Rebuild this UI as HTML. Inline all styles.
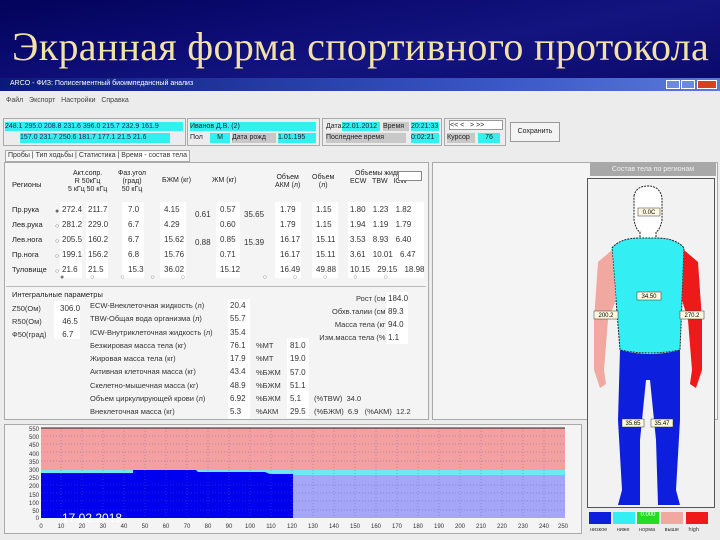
<!DOCTYPE html>
<html><head><meta charset="utf-8"><style>
*{margin:0;padding:0;box-sizing:border-box}
body{width:720px;height:540px;overflow:hidden;position:relative;background:#0a0a6a;font-family:"Liberation Sans",sans-serif;font-size:8px;color:#222}
.a{position:absolute;white-space:nowrap}
.c{background:#33f0f0}
.w{background:#fff}
.g{background:#c8c8c8}
.t{font-size:8px;line-height:10px}
</style></head><body>
<div class="a" style="left:0;top:0;width:720px;height:80px;background:linear-gradient(170deg,#03035a 0%,#0a0a70 30%,#141480 60%,#0a0a6c 100%)"></div>
<div class="a" style="left:12px;top:23px;font-family:'Liberation Serif',serif;font-size:40px;color:#f2e2a6;letter-spacing:0.3px">Экранная форма спортивного протокола</div>
<!-- window -->
<div class="a" style="left:0;top:78px;width:720px;height:13px;background:linear-gradient(90deg,#0a1a7a,#3a58c8 70%,#5a7ad8)"></div>
<div class="a t" style="left:10px;top:79px;color:#fff;font-size:7px">ARCO - ФИЗ: Полисегментный биоимпедансный анализ</div>
<div class="a" style="left:666px;top:80px;width:14px;height:9px;background:#6a8ae0;border:1px solid #fff"></div>
<div class="a" style="left:681px;top:80px;width:14px;height:9px;background:#6a8ae0;border:1px solid #fff"></div>
<div class="a" style="left:697px;top:80px;width:20px;height:9px;background:#d84020;border:1px solid #fff"></div>
<div class="a" style="left:0;top:91px;width:720px;height:449px;background:#ececec"></div>
<div class="a t" style="left:6px;top:96px;color:#444;font-size:7px">Файл &nbsp; Экспорт &nbsp; Настройки &nbsp; Справка</div>
<!-- toolbar -->
<div class="a" style="left:3px;top:118px;width:183px;height:28px;border:1px solid #aaa"></div>
<div class="a c t" style="left:5px;top:122px;width:178px;height:9px;font-size:7px;line-height:9px;color:#225">248.1 295.0 208.8 231.6 396.0 215.7 232.9 161.9</div>
<div class="a c t" style="left:20px;top:133px;width:150px;height:10px;font-size:7px;line-height:10px;color:#225">157.0 231.7 250.6 181.7 177.1 21.5 21.6</div>
<div class="a" style="left:187px;top:118px;width:133px;height:28px;border:1px solid #aaa"></div>
<div class="a c t" style="left:190px;top:122px;width:126px;height:9px;font-size:7px;line-height:9px">Иванов Д.В. (2)</div>
<div class="a t" style="left:190px;top:133px;font-size:7px">Пол</div>
<div class="a c t" style="left:210px;top:133px;width:20px;height:10px;font-size:7px;text-align:center">М</div>
<div class="a g t" style="left:232px;top:133px;width:44px;height:10px;font-size:7px">Дата рожд</div>
<div class="a c t" style="left:278px;top:133px;width:38px;height:10px;font-size:7px">1.01.195</div>
<div class="a" style="left:322px;top:118px;width:120px;height:28px;border:1px solid #aaa"></div>
<div class="a t" style="left:326px;top:122px;font-size:7px">Дата</div>
<div class="a c t" style="left:342px;top:122px;width:38px;height:9px;font-size:7px;line-height:9px">22.01.2012</div>
<div class="a g t" style="left:383px;top:122px;width:26px;height:9px;font-size:7px;line-height:9px">Время</div>
<div class="a c t" style="left:411px;top:122px;width:28px;height:9px;font-size:7px;line-height:9px">20:21:33</div>
<div class="a g t" style="left:326px;top:133px;width:80px;height:10px;font-size:7px">Последнее время</div>
<div class="a c t" style="left:411px;top:133px;width:28px;height:10px;font-size:7px">0:02:21</div>
<div class="a" style="left:444px;top:118px;width:62px;height:28px;border:1px solid #aaa"></div>
<div class="a w t" style="left:449px;top:120px;width:54px;height:10px;font-size:7px;border:1px solid #999">&lt;&lt; &lt; &nbsp; &gt; &gt;&gt;</div>
<div class="a g t" style="left:447px;top:133px;width:28px;height:10px;font-size:7px">Курсор</div>
<div class="a c t" style="left:478px;top:133px;width:22px;height:10px;font-size:7px;text-align:center">76</div>
<div class="a t" style="left:510px;top:122px;width:50px;height:20px;border:1px solid #999;background:#f4f4f4;font-size:7px;line-height:18px;text-align:center">Сохранить</div>
<!-- tabs -->
<div class="a t" style="left:5px;top:150px;font-size:7px;color:#333;border:1px solid #aaa;background:#f6f6f6;padding:0 2px">Пробы | Тип ходьбы | Статистика | <span style="background:#fff">Время - состав тела</span></div>
<!-- main panel -->
<div class="a" style="left:4px;top:162px;width:425px;height:258px;border:1px solid #aaa;background:#f4f4f4"></div>
<div class="a" style="left:6px;top:286px;width:420px;height:1px;background:#bbb"></div>
<div class="a" style="left:432px;top:162px;width:286px;height:258px;border:1px solid #aaa;background:#f4f4f4"></div>
<!-- table headers -->
<div class="a t" style="left:12px;top:180px;font-size:7.5px">Регионы</div>
<div class="a t" style="left:68px;top:170px;font-size:7px;text-align:center;line-height:8px">Акт.сопр.<br>R 50кГц<br>5 кГц 50 кГц</div>
<div class="a t" style="left:118px;top:170px;font-size:7px;text-align:center;line-height:8px">Фаз.угол<br>(град)<br>50 кГц</div>
<div class="a t" style="left:162px;top:176px;font-size:7px">БЖМ (кг)</div>
<div class="a t" style="left:212px;top:176px;font-size:7px">ЖМ (кг)</div>
<div class="a t" style="left:275px;top:174px;font-size:7px;line-height:8px;text-align:center">Объем<br>АКМ (л)</div>
<div class="a t" style="left:312px;top:174px;font-size:7px;line-height:8px;text-align:center">Объем<br>(л)</div>
<div class="a t" style="left:350px;top:170px;font-size:7px;line-height:8px;text-align:center">Объемы жидк.<br>ECW &nbsp; TBW &nbsp; ICW</div>
<div class="a w" style="left:398px;top:171px;width:24px;height:10px;border:1px solid #888"></div>
<div class="a t" style="left:12px;top:202px;font-size:7.5px;line-height:15px">Пр.рука<br>Лев.рука<br>Лев.нога<br>Пр.нога<br>Туловище</div>
<div class="a" style="left:55px;top:204px;font-size:7px;line-height:15px;color:#666">●<br>○<br>○<br>○<br>○</div>
<!-- values -->
<div class="a w" style="left:60px;top:202px;width:22px;height:76px"></div>
<div class="a w" style="left:86px;top:202px;width:22px;height:76px"></div>
<div class="a w" style="left:122px;top:202px;width:22px;height:76px"></div>
<div class="a w" style="left:160px;top:202px;width:26px;height:76px"></div>
<div class="a w" style="left:216px;top:202px;width:24px;height:76px"></div>
<div class="a w" style="left:275px;top:202px;width:26px;height:76px"></div>
<div class="a w" style="left:312px;top:202px;width:26px;height:76px"></div>
<div class="a w" style="left:348px;top:202px;width:76px;height:76px"></div>
<div class="a" style="left:62px;top:202px;font-size:8px;line-height:15px;color:#333">272.4<br>281.2<br>205.5<br>199.1<br>21.6</div>
<div class="a" style="left:88px;top:202px;font-size:8px;line-height:15px;color:#333">211.7<br>229.0<br>160.2<br>156.2<br>21.5</div>
<div class="a" style="left:128px;top:202px;font-size:8px;line-height:15px;color:#333">7.0<br>6.7<br>6.7<br>6.8<br>15.3</div>
<div class="a" style="left:164px;top:202px;font-size:8px;line-height:15px;color:#333">4.15<br>4.29<br>15.62<br>15.76<br>36.02</div>
<div class="a" style="left:195px;top:210px;font-size:8px;color:#333">0.61</div>
<div class="a" style="left:195px;top:238px;font-size:8px;color:#333">0.88</div>
<div class="a" style="left:220px;top:202px;font-size:8px;line-height:15px;color:#333">0.57<br>0.60<br>0.85<br>0.71<br>15.12</div>
<div class="a" style="left:244px;top:210px;font-size:8px;color:#333">35.65</div>
<div class="a" style="left:244px;top:238px;font-size:8px;color:#333">15.39</div>
<div class="a" style="left:280px;top:202px;font-size:8px;line-height:15px;color:#333">1.79<br>1.79<br>16.17<br>16.17<br>16.49</div>
<div class="a" style="left:316px;top:202px;font-size:8px;line-height:15px;color:#333">1.15<br>1.15<br>15.11<br>15.11<br>49.88</div>
<div class="a" style="left:350px;top:202px;font-size:8px;line-height:15px;color:#333;word-spacing:5px">1.80 1.23 1.82<br>1.94 1.19 1.79<br>3.53 8.93 6.40<br>3.61 10.01 6.47<br>10.15 29.15 18.98</div>
<div class="a" style="left:60px;top:274px;font-size:7px;color:#777;word-spacing:24px">● ○ ○ ○ ○ &nbsp; ○ ○ ○ ○ ○</div>
<!-- integral -->
<div class="a t" style="left:12px;top:290px;font-size:7.5px">Интегральные параметры</div>
<div class="a" style="left:12px;top:302px;font-size:7.5px;line-height:13px;color:#333">Z50(Ом)<br>R50(Ом)<br>Ф50(град)</div>
<div class="a w" style="left:54px;top:301px;width:26px;height:38px"></div>
<div class="a" style="left:60px;top:302px;font-size:8px;line-height:13px;color:#333">306.0<br>&nbsp;46.5<br>&nbsp;6.7</div>
<div class="a" style="left:90px;top:299px;font-size:7.5px;line-height:13.3px;color:#333">ECW-Внеклеточная жидкость (л)<br>TBW-Общая вода организма (л)<br>ICW-Внутриклеточная жидкость (л)<br>Безжировая масса тела (кг)<br>Жировая масса тела (кг)<br>Активная клеточная масса (кг)<br>Скелетно-мышечная масса (кг)<br>Объем циркулирующей крови (л)<br>Внеклеточная масса (кг)</div>
<div class="a w" style="left:228px;top:299px;width:22px;height:120px"></div>
<div class="a" style="left:230px;top:299px;font-size:8px;line-height:13.3px;color:#333">20.4<br>55.7<br>35.4<br>76.1<br>17.9<br>43.4<br>48.9<br>6.92<br>5.3</div>
<div class="a" style="left:256px;top:339px;font-size:7.5px;line-height:13.3px;color:#333">%МТ<br>%МТ<br>%БЖМ<br>%БЖМ<br>%БЖМ<br>%АКМ</div>
<div class="a w" style="left:287px;top:338px;width:22px;height:80px"></div>
<div class="a" style="left:290px;top:339px;font-size:8px;line-height:13.3px;color:#333">81.0<br>19.0<br>57.0<br>51.1<br>5.1<br>29.5</div>
<div class="a" style="left:314px;top:392px;font-size:7.5px;line-height:13.3px;color:#333">(%TBW) &nbsp;34.0<br>(%БЖМ) &nbsp;6.9 &nbsp; (%АКМ) &nbsp;12.2</div>
<div class="a" style="left:316px;top:292px;font-size:7.5px;line-height:13px;color:#333;text-align:right;width:72px">Рост (см)<br>Обхв.талии (см)<br>Масса тела (кг)<br>Изм.масса тела (%)</div>
<div class="a w" style="left:386px;top:292px;width:22px;height:52px"></div>
<div class="a" style="left:388px;top:292px;font-size:8px;line-height:13px;color:#333">184.0<br>89.3<br>94.0<br>1.1</div>
<!-- body panel -->
<div class="a" style="left:590px;top:163px;width:126px;height:13px;background:#a8a8a8;color:#eee;font-size:7px;line-height:13px;text-align:center">Состав тела по регионам</div>
<div class="a" style="left:587px;top:178px;width:128px;height:330px;border:1px solid #555;background:#f2f2f2"></div>
<svg class="a" style="left:587px;top:178px" width="128" height="330" viewBox="587 178 128 330">
<path d="M634 196 Q636 186 648 186 Q660 186 662 198 L662 220 Q660 230 656 232 L656 240 L640 240 L640 232 Q636 230 634 220 Z" fill="#fff" stroke="#222" stroke-dasharray="2 1"/>
<path d="M612 248 Q620 238 640 238 L656 238 Q676 238 684 248 L682 300 L680 350 Q650 356 620 350 L616 300 Z" fill="#33eef2" stroke="#222" stroke-dasharray="2 1"/>
<path d="M612 250 L598 262 L594 320 L594 370 L600 388 L606 384 L604 370 L608 320 L616 300 Z" fill="#f0a8a0"/>
<path d="M684 250 L698 262 L702 320 L702 370 L696 388 L690 384 L692 370 L688 320 L682 300 Z" fill="#ee1a1a"/>
<path d="M620 350 Q650 358 680 350 L680 420 L676 490 L680 505 L658 505 L656 440 L650 380 L646 380 L640 440 L640 505 L618 505 L622 490 L618 420 Z" fill="#0d1fdc"/>
<g font-size="6" font-family="Liberation Sans" text-anchor="middle">
<rect x="638" y="208" width="22" height="8" fill="#fff8e0" stroke="#333" stroke-width=".5"/><text x="649" y="214">0.0C</text>
<rect x="637" y="292" width="24" height="8" fill="#fff8e0" stroke="#333" stroke-width=".5"/><text x="649" y="298">34.50</text>
<rect x="594" y="311" width="24" height="8" fill="#fff8e0" stroke="#333" stroke-width=".5"/><text x="606" y="317">200.2</text>
<rect x="680" y="311" width="24" height="8" fill="#fff8e0" stroke="#333" stroke-width=".5"/><text x="692" y="317">270.2</text>
<rect x="622" y="419" width="22" height="8" fill="#fff8e0" stroke="#333" stroke-width=".5"/><text x="633" y="425">35.65</text>
<rect x="651" y="419" width="22" height="8" fill="#fff8e0" stroke="#333" stroke-width=".5"/><text x="662" y="425">35.47</text>
</g></svg>
<div class="a" style="left:589px;top:512px;width:22px;height:12px;background:#0d1fdc"></div>
<div class="a" style="left:613px;top:512px;width:22px;height:12px;background:#33eef2"></div>
<div class="a" style="left:637px;top:512px;width:22px;height:12px;background:#22dd22;color:#fff;font-size:6px;text-align:center">0.000</div>
<div class="a" style="left:661px;top:512px;width:22px;height:12px;background:#f0a8a0"></div>
<div class="a" style="left:686px;top:512px;width:22px;height:12px;background:#ee1a1a"></div>
<div class="a" style="left:590px;top:527px;font-size:5.5px;color:#333;word-spacing:8px">низкое ниже норма выше high</div>
<!-- chart -->
<div class="a" style="left:4px;top:424px;width:578px;height:110px;border:1px solid #aaa;background:#f4f4f4"></div>
<svg class="a" style="left:0;top:420px" width="585" height="120" viewBox="0 420 585 120">
<rect x="41" y="428" width="524" height="90" fill="#f4a0a0"/>
<rect x="41" y="470" width="524" height="48" fill="#a6a6f8"/>
<rect x="41" y="470" width="524" height="5" fill="#70e8f0"/>
<path d="M41 473 L133 473 L133 470 L196 470 L198 472 L265 472 L270 474 L293 474 L293 518 L41 518 Z" fill="#0000ee"/>
<g stroke="#5a5ab0" stroke-width=".4" stroke-dasharray="1 2">
<line x1="41" y1="436" x2="565" y2="436"/><line x1="41" y1="444" x2="565" y2="444"/><line x1="41" y1="452" x2="565" y2="452"/><line x1="41" y1="461" x2="565" y2="461"/><line x1="41" y1="485" x2="565" y2="485"/><line x1="41" y1="493" x2="565" y2="493"/><line x1="41" y1="501" x2="565" y2="501"/><line x1="41" y1="510" x2="565" y2="510"/>
</g>
<g stroke="#6060b0" stroke-width=".4" stroke-dasharray="1 2">
<line x1="61" y1="428" x2="61" y2="518"/><line x1="82" y1="428" x2="82" y2="518"/><line x1="103" y1="428" x2="103" y2="518"/><line x1="124" y1="428" x2="124" y2="518"/><line x1="145" y1="428" x2="145" y2="518"/><line x1="166" y1="428" x2="166" y2="518"/><line x1="187" y1="428" x2="187" y2="518"/><line x1="208" y1="428" x2="208" y2="518"/><line x1="229" y1="428" x2="229" y2="518"/><line x1="250" y1="428" x2="250" y2="518"/><line x1="271" y1="428" x2="271" y2="518"/><line x1="292" y1="428" x2="292" y2="518"/><line x1="313" y1="428" x2="313" y2="518"/><line x1="334" y1="428" x2="334" y2="518"/><line x1="355" y1="428" x2="355" y2="518"/><line x1="376" y1="428" x2="376" y2="518"/><line x1="397" y1="428" x2="397" y2="518"/><line x1="418" y1="428" x2="418" y2="518"/><line x1="439" y1="428" x2="439" y2="518"/><line x1="460" y1="428" x2="460" y2="518"/><line x1="481" y1="428" x2="481" y2="518"/><line x1="502" y1="428" x2="502" y2="518"/><line x1="523" y1="428" x2="523" y2="518"/><line x1="544" y1="428" x2="544" y2="518"/>
</g>
<line x1="41" y1="428" x2="565" y2="428" stroke="#222"/>
<g font-size="6" font-family="Liberation Sans" fill="#333" text-anchor="end">
<text x="39" y="431">550</text><text x="39" y="439">500</text><text x="39" y="447">450</text><text x="39" y="456">400</text><text x="39" y="464">350</text><text x="39" y="472">300</text><text x="39" y="480">250</text><text x="39" y="488">200</text><text x="39" y="497">150</text><text x="39" y="505">100</text><text x="39" y="513">50</text><text x="39" y="520">0</text>
</g>
<g font-size="6" font-family="Liberation Sans" fill="#333" text-anchor="middle">
<text x="41" y="528">0</text><text x="61" y="528">10</text><text x="82" y="528">20</text><text x="103" y="528">30</text><text x="124" y="528">40</text><text x="145" y="528">50</text><text x="166" y="528">60</text><text x="187" y="528">70</text><text x="208" y="528">80</text><text x="229" y="528">90</text><text x="250" y="528">100</text><text x="271" y="528">110</text><text x="292" y="528">120</text><text x="313" y="528">130</text><text x="334" y="528">140</text><text x="355" y="528">150</text><text x="376" y="528">160</text><text x="397" y="528">170</text><text x="418" y="528">180</text><text x="439" y="528">190</text><text x="460" y="528">200</text><text x="481" y="528">210</text><text x="502" y="528">220</text><text x="523" y="528">230</text><text x="544" y="528">240</text><text x="563" y="528">250</text>
</g>
<text x="62" y="522" font-size="12" font-family="Liberation Sans" fill="#fff">17.02.2018</text>
</svg>
</body></html>
